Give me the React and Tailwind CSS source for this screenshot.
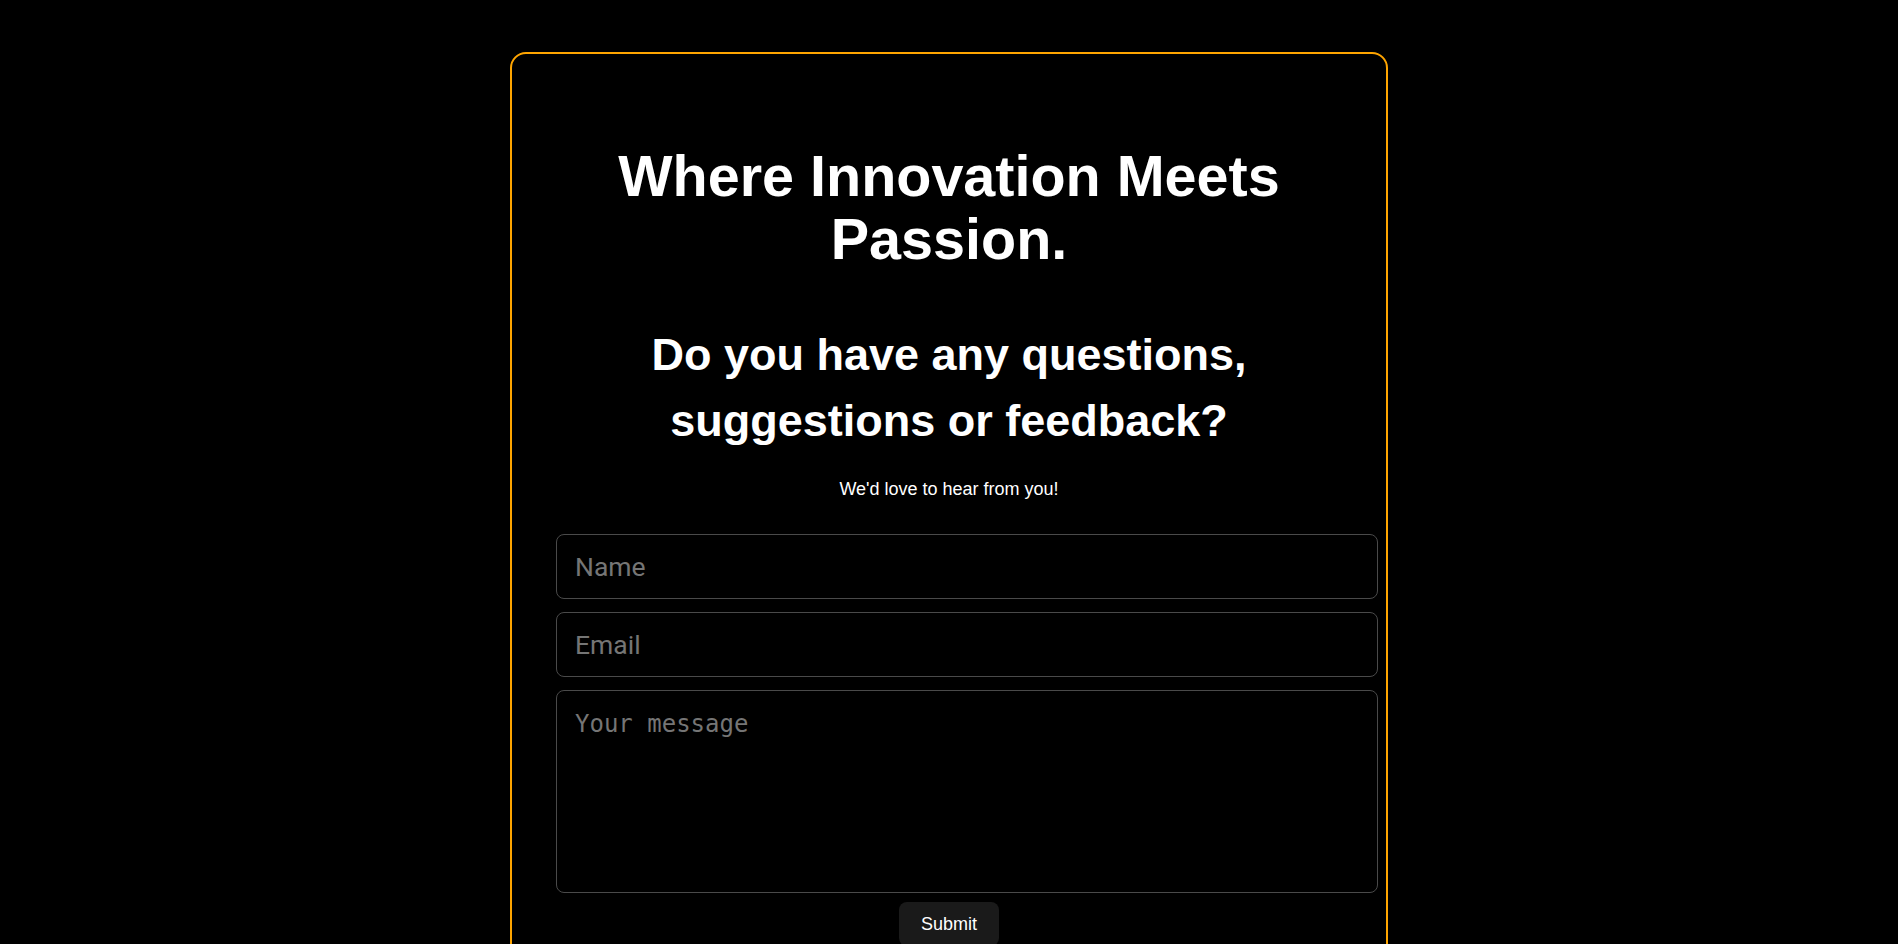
export default function App() {
  return (
    <div className="min-h-screen bg-black flex justify-center" style={{ fontFamily: '"Liberation Sans", Arial, sans-serif' }}>
      <div className="mt-[52px] mb-10 w-[878px] h-fit border-2 border-[#ffa500] rounded-[16px] px-[44px] pt-[91px] pb-10 text-white">
        <h1 className="text-center font-bold text-[57.5px] leading-[63px] px-[60px]">
          Where Innovation Meets Passion.
        </h1>
        <h2 className="mt-[51px] text-center font-bold text-[45px] leading-[66px] px-[70px]">
          Do you have any questions, suggestions or feedback?
        </h2>
        <p className="mt-[25px] text-center text-[18px] leading-[21px]">We'd love to hear from you!</p>
        <form className="mt-[34px] flex flex-col" onSubmit={(e) => e.preventDefault()}>
          <input
            type="text"
            placeholder="Name"
            className="w-[822px] h-[65px] px-[18px] bg-black border border-[#4a4a4a] rounded-[8px] text-white text-[26.5px] placeholder:text-[#757575] outline-none"
            style={{ fontFamily: 'Roboto, "Liberation Sans", sans-serif' }}
          />
          <input
            type="email"
            placeholder="Email"
            className="mt-[13px] w-[822px] h-[65px] px-[18px] bg-black border border-[#4a4a4a] rounded-[8px] text-white text-[26.5px] placeholder:text-[#757575] outline-none"
            style={{ fontFamily: 'Roboto, "Liberation Sans", sans-serif' }}
          />
          <textarea
            placeholder="Your message"
            className="mt-[13px] w-[822px] h-[203px] px-[18px] pt-[19px] pb-[17px] bg-black border border-[#4a4a4a] rounded-[8px] text-white text-[24px] leading-[28px] placeholder:text-[#757575] outline-none resize-none"
            style={{ fontFamily: '"DejaVu Sans Mono", monospace' }}
          />
          <button
            type="submit"
            className="mt-[9px] self-center w-[100px] h-[44px] bg-[#1a1a1a] rounded-[8px] text-white text-[18px] leading-[21px]"
          >
            Submit
          </button>
        </form>
      </div>
    </div>
  );
}
